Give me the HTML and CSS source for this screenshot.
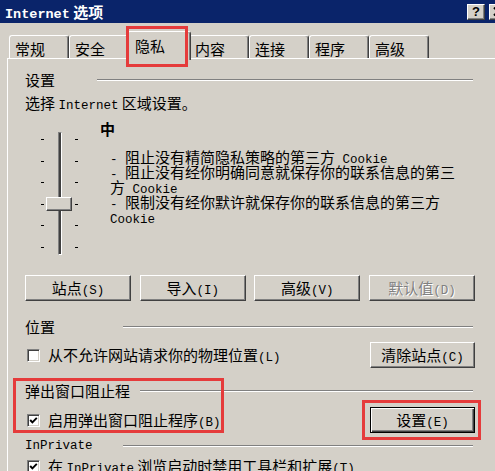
FILE: index.html
```html
<!DOCTYPE html>
<html lang="zh-CN">
<head>
    <meta charset="UTF-8">
    <meta name="viewport" content="width=device-width, initial-scale=1.0">
    <title>Internet 选项</title>
    <link rel="stylesheet" href="styles.css">
</head>
<body>
<div class="window">
    <div class="titlebar">
        <span class="title"><span class="en">Internet</span> 选项</span>
        <div class="caption-btns">
            <span class="cap">?</span>
            <span class="cap">
                <svg width="10" height="9" viewBox="0 0 10 9"><path d="M1 0.5 L9 8.5 M9 0.5 L1 8.5" stroke="#000" stroke-width="2"/></svg>
            </span>
        </div>
    </div>

    <div class="tabs">
        <div class="tab">常规</div>
        <div class="tab">安全</div>
        <div class="tab active">隐私</div>
        <div class="tab">内容</div>
        <div class="tab">连接</div>
        <div class="tab">程序</div>
        <div class="tab">高级</div>
    </div>

    <div class="panel">
        <div class="content">
            <div class="group-title"><span class="gt-label w-set">设置</span><span class="rule"></span></div>
            <p class="line">选择 <span class="en">Internet</span> 区域设置。</p>

            <div class="privacy">
                <div class="slider">
                    <div class="ticks"><i></i><i></i><i></i><i></i><i></i><i></i></div>
                    <div class="track"></div>
                    <div class="ticks"><i></i><i></i><i></i><i></i><i></i><i></i></div>
                    <div class="thumb"></div>
                </div>
                <div class="desc">
                    <div class="level">中</div>
                    <div class="rules">
                        <span class="en">- </span>阻止没有精简隐私策略的第三方<span class="en"> Cookie</span><br>
                        <span class="en">- </span>阻止没有经你明确同意就保存你的联系信息的第三<br>
                        方<span class="en"> Cookie</span><br>
                        <span class="en">- </span>限制没有经你默许就保存你的联系信息的第三方<br>
                        <span class="en">Cookie</span>
                    </div>
                </div>
            </div>

            <div class="btn-row">
                <button class="btn">站点<span class="en">(S)</span></button>
                <button class="btn">导入<span class="en">(I)</span></button>
                <button class="btn">高级<span class="en">(V)</span></button>
                <button class="btn disabled">默认值<span class="en">(D)</span></button>
            </div>

            <div class="group-title sp-loc"><span class="gt-label w-loc">位置</span><span class="rule"></span></div>
            <div class="opt-row sp-row1">
                <span class="check"></span>
                <span class="opt-text">从不允许网站请求你的物理位置<span class="en">(L)</span></span>
                <button class="btn side">清除站点<span class="en">(C)</span></button>
            </div>

            <div class="group-title sp-pop"><span class="gt-label w-pop">弹出窗口阻止程</span><span class="rule"></span></div>
            <div class="opt-row sp-row2">
                <span class="check">
                    <svg width="9" height="9" viewBox="0 0 9 9"><polyline points="1.2,4 3.4,6.4 7.8,1.8" fill="none" stroke="#000" stroke-width="1.9"/></svg>
                </span>
                <span class="opt-text">启用弹出窗口阻止程序<span class="en">(B)</span></span>
                <button class="btn side default">设置<span class="en">(E)</span></button>
            </div>

            <div class="group-title sp-inp"><span class="gt-label w-inp en">InPrivate</span><span class="rule"></span></div>
            <div class="opt-row sp-row3">
                <span class="check">
                    <svg width="9" height="9" viewBox="0 0 9 9"><polyline points="1.2,4 3.4,6.4 7.8,1.8" fill="none" stroke="#000" stroke-width="1.9"/></svg>
                </span>
                <span class="opt-text">在 <span class="en">InPrivate</span> 浏览启动时禁用工具栏和扩展<span class="en">(T)</span></span>
            </div>
        </div>
    </div>
</div>

<!-- red annotation boxes -->
<div class="mark m-tab"></div>
<div class="mark m-pop"></div>
<div class="mark m-set"></div>
</body>
</html>
```

FILE: styles.css
```css
body {
  margin: 0;
  padding: 0;
  width: 495px;
  height: 471px;
  overflow: hidden;
  position: relative;
  background-color: #d4d0c8;
  font-family: "Noto Sans CJK SC", sans-serif;
  font-size: 15px;
  line-height: 16px;
  color: #000;
}

.en {
  font-family: "Liberation Mono", monospace;
  font-size: 12.5px;
  line-height: 8px;
}

.window {
  width: 520px;
}

/* title bar */
.titlebar {
  height: 23px;
  background-color: #0a246a;
  display: flex;
  align-items: center;
  padding: 0 13px 0 5px;
}

.title {
  color: #fff;
  font-weight: bold;
}

.title .en {
  font-size: 13.5px;
}

.caption-btns {
  margin-left: auto;
  display: flex;
  gap: 4px;
}

.cap {
  width: 18px;
  height: 16px;
  box-sizing: border-box;
  display: flex;
  align-items: center;
  justify-content: center;
  background-color: #d4d0c8;
  border: 1px solid;
  border-color: #fff #404040 #404040 #fff;
  box-shadow: inset -1px -1px #808080;
  font-family: "Liberation Sans", sans-serif;
  font-weight: bold;
  font-size: 13px;
}

/* tabs */
.tabs {
  display: flex;
  align-items: flex-end;
  height: 28px;
  margin-top: 7px;
  padding-left: 9px;
}

.tab {
  width: 60px;
  height: 23px;
  box-sizing: border-box;
  padding: 5px 0 0 5px;
  border-top: 1px solid #fff;
  border-left: 1px solid #fff;
  border-right: 1px solid #404040;
  box-shadow: inset -1px 0 #808080;
  border-radius: 3px 3px 0 0;
}

.tab.active {
  width: 64px;
  height: 29px;
  margin: 0 -2px -2px;
  padding: 6px 0 0 7px;
  background-color: #d4d0c8;
  position: relative;
  z-index: 1;
}

/* panel */
.panel {
  margin-left: 7px;
  border-top: 1px solid #fff;
  border-left: 1px solid #fff;
  padding: 13px 0 0 17px;
  height: 420px;
}

.content {
  width: 450px;
}

.group-title {
  display: flex;
  align-items: center;
  height: 16px;
}

.gt-label {
  flex-shrink: 0;
}

.w-set { width: 72px; }
.w-loc { width: 98px; }
.w-pop { width: 115px; }
.w-inp { width: 98px; line-height: 16px; }

.rule {
  flex: 1;
  margin-right: 2px;
  border-top: 1px solid #808080;
  border-bottom: 1px solid #fff;
}

.line {
  margin: 7px 0 0;
}

/* privacy slider */
.privacy {
  display: flex;
  margin-top: 10px;
}

.slider {
  position: relative;
  display: flex;
  justify-content: space-between;
  width: 37px;
  height: 123px;
  margin: 11px 0 0 16px;
}

.ticks {
  display: flex;
  flex-direction: column;
  justify-content: space-between;
  padding: 7px 0;
  width: 3px;
}

.ticks i {
  display: block;
  width: 3px;
  height: 1px;
  background-color: #000;
}

.track {
  width: 4px;
  box-sizing: border-box;
  border-left: 1px solid #808080;
  border-right: 1px solid #fff;
  border-top: 1px solid #808080;
  border-bottom: 1px solid #fff;
  background-color: #404040;
}

.thumb {
  position: absolute;
  left: 5px;
  top: 65px;
  width: 26px;
  height: 14px;
  box-sizing: border-box;
  background-color: #d4d0c8;
  border: 1px solid;
  border-color: #fff #404040 #404040 #fff;
  box-shadow: inset -1px -1px #808080;
}

.desc {
  margin-left: 22px;
}

.level {
  font-weight: bold;
  line-height: 15px;
}

.rules {
  margin-top: 13px;
  padding-left: 10px;
  line-height: 15px;
  white-space: nowrap;
}

/* buttons */
.btn-row {
  display: flex;
  justify-content: space-between;
  margin-top: 20px;
}

.btn {
  width: 106px;
  height: 26px;
  padding: 0;
  box-sizing: border-box;
  font: inherit;
  color: #000;
  background-color: #d4d0c8;
  border: 1px solid;
  border-color: #fff #404040 #404040 #fff;
  box-shadow: inset -1px -1px #808080;
}

.btn.disabled {
  color: #808080;
  text-shadow: 1px 1px #fff;
}

.btn.side {
  margin-left: auto;
  width: 105px;
}

.btn.default {
  border-color: #000;
  box-shadow: inset 1px 1px #fff, inset -1px -1px #404040, inset -2px -2px #808080;
}

/* option rows */
.opt-row {
  display: flex;
  align-items: center;
  height: 26px;
  padding-left: 2px;
}

.check {
  width: 13px;
  height: 13px;
  box-sizing: border-box;
  display: flex;
  align-items: center;
  justify-content: center;
  background-color: #fff;
  border: 1px solid;
  border-color: #808080 #fff #fff #808080;
  box-shadow: inset 1px 1px #404040, inset -1px -1px #d4d0c8;
  flex-shrink: 0;
}

.opt-text {
  margin-left: 8px;
  white-space: nowrap;
}

.sp-loc { margin-top: 18px; }
.sp-row1 { margin-top: 7px; }
.sp-pop { margin-top: 15px; }
.sp-row2 { margin-top: 8px; }
.sp-inp { margin-top: 5px; }
.sp-row3 { margin-top: -1px; }

/* red annotation boxes */
.mark {
  position: absolute;
  box-sizing: border-box;
  border: 3px solid #e53b3b;
  z-index: 5;
}

.m-tab {
  left: 126px;
  top: 26px;
  width: 62px;
  height: 41px;
}

.m-pop {
  left: 13px;
  top: 378px;
  width: 211px;
  height: 55px;
}

.m-set {
  left: 362px;
  top: 400px;
  width: 119px;
  height: 40px;
}
```
